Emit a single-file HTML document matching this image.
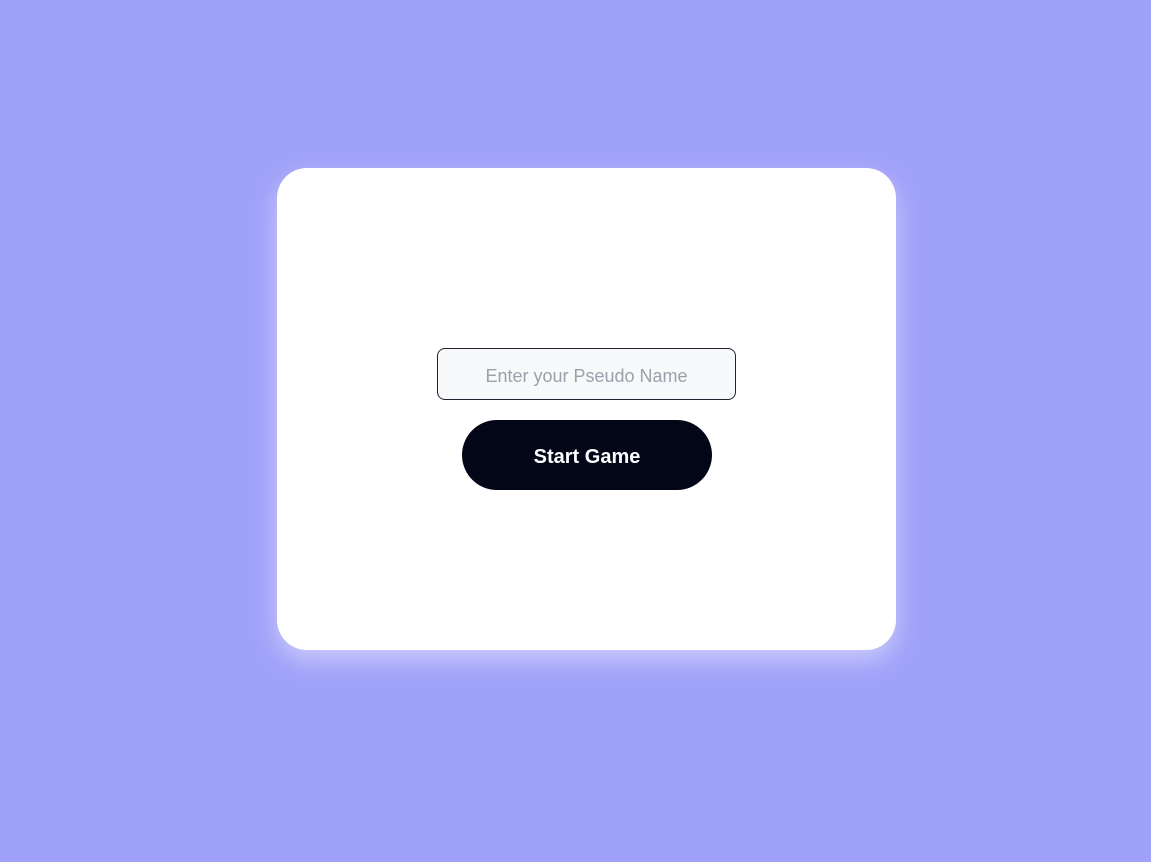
<!DOCTYPE html>
<html><head><style>
html,body{margin:0;padding:0;width:1151px;height:862px;background:#a0a1f9;overflow:hidden;font-family:"Liberation Sans",sans-serif}
.card{position:absolute;left:277px;top:168px;width:619px;height:482px;background:#fff;border-radius:30px;box-shadow:0 10px 25px rgba(255,255,255,.45)}
.inp{position:absolute;left:437px;top:348px;width:297px;height:50px;border:1px solid #1f2230;border-radius:8px;background:#f8f9fb;color:#9ca0ab;font-size:18px;line-height:54px;text-align:center}
.btn{position:absolute;left:462px;top:420px;width:250px;height:70px;border-radius:35px;background:#030616;color:#fff;font-weight:bold;font-size:20px;line-height:74px;text-align:center}
</style></head><body>
<div class="card"></div>
<div class="inp">Enter your Pseudo Name</div>
<div class="btn">Start Game</div>
</body></html>
